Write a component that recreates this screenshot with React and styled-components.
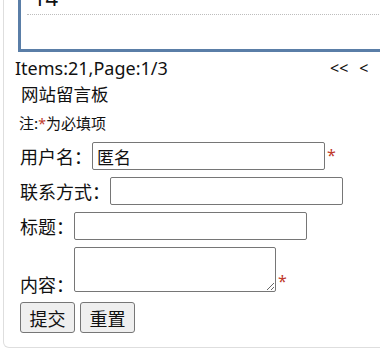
import React from 'react';
import styled, { createGlobalStyle } from 'styled-components';

const GlobalStyle = createGlobalStyle`
  html, body {
    margin: 0;
    padding: 0;
    overflow: hidden;
    background: #fff;
    color: #111;
    font-family: "Noto Sans CJK SC", "Noto Sans", sans-serif;
  }
`;

const Shell = styled.div`
  margin: -40px 0 0 3px;
  width: 440px;
  padding: 0 0 14px 11px;
  border: 1px solid #dedede;
  border-top: none;
  border-radius: 0 0 6px 6px;
  box-sizing: border-box;
`;

const ListBox = styled.div`
  margin-left: 3px;
  padding: 0 0 34px 6px;
  border: 3px solid #5a7ea7;
`;

const ListRow = styled.div`
  height: 52px;
  box-sizing: border-box;
  display: flex;
  align-items: flex-end;
  padding: 0 0 7px 6px;
  border-bottom: 1px dotted #bdbdbd;
  font-family: "Noto Sans", sans-serif;
  font-size: 22px;
  line-height: 20px;
`;

const Pager = styled.div`
  display: grid;
  grid-template-columns: 315px auto;
  align-items: center;
  margin-top: 5px;
  font-family: "Noto Sans", "Noto Sans CJK SC", sans-serif;
  font-size: 18px;
  line-height: 22px;
  white-space: nowrap;
`;

const Nav = styled.div`
  display: flex;
  gap: 11px;
  font-size: 16px;
`;

const NavLink = styled.a`
  color: #111;
  text-decoration: none;
`;

const Title = styled.div`
  margin: 4px 0 0 6px;
  font-size: 17.5px;
  line-height: 22px;
`;

const Note = styled.div`
  margin: 8px 0 0 4px;
  font-size: 15px;
  line-height: 20px;
`;

const Star = styled.span`
  color: #c0392b;
  font-family: "Noto Sans", sans-serif;
  font-size: ${p => (p.$small ? '14px' : '16px')};
  line-height: 16px;
  margin-left: ${p => (p.$small ? '0' : '2px')};
  margin-bottom: ${p => (p.$small ? '0' : '3px')};
`;

const Form = styled.form`
  margin: 9px 0 0 5px;
  display: flex;
  flex-direction: column;
  gap: 7px;
`;

const Row = styled.div`
  display: flex;
  align-items: ${p => (p.$bottom ? 'flex-end' : 'center')};
`;

const Label = styled.label`
  font-size: 18px;
  line-height: 16px;
  white-space: nowrap;
`;

const TextInput = styled.input`
  width: 233px;
  height: 28px;
  box-sizing: border-box;
  padding: 0 4px;
  border: 1px solid #767676;
  border-radius: 2px;
  font-family: "Noto Sans CJK SC", sans-serif;
  font-size: 17px;
  color: #111;
  background: #fff;
  outline: none;
`;

const TextArea = styled.textarea`
  width: 202px;
  height: 45px;
  box-sizing: border-box;
  border: 1px solid #767676;
  border-radius: 2px;
  font-family: "Noto Sans CJK SC", sans-serif;
  font-size: 15px;
  background: #fff;
  outline: none;
`;

const Buttons = styled.div`
  display: flex;
  gap: 5px;
  margin-top: 3px;
`;

const Button = styled.button`
  width: 55px;
  height: 31px;
  padding: 0;
  border: 1px solid #767676;
  border-radius: 3px;
  background: #efefef;
  color: #111;
  font-family: "Noto Sans CJK SC", sans-serif;
  font-size: 18px;
  line-height: 20px;
`;

export default function App() {
  return (
    <>
      <GlobalStyle />
      <Shell>
        <ListBox>
          <ListRow>14</ListRow>
        </ListBox>
        <Pager>
          <span>Items:21,Page:1/3</span>
          <Nav>
            <NavLink href="#">&lt;&lt;</NavLink>
            <NavLink href="#">&lt;</NavLink>
          </Nav>
        </Pager>
        <Title>网站留言板</Title>
        <Note>
          注:<Star $small>*</Star>为必填项
        </Note>
        <Form onSubmit={e => e.preventDefault()}>
          <Row>
            <Label>用户名：</Label>
            <TextInput defaultValue="匿名" />
            <Star>*</Star>
          </Row>
          <Row>
            <Label>联系方式：</Label>
            <TextInput />
          </Row>
          <Row>
            <Label>标题：</Label>
            <TextInput />
          </Row>
          <Row $bottom>
            <Label>内容：</Label>
            <TextArea />
            <Star>*</Star>
          </Row>
          <Buttons>
            <Button type="submit">提交</Button>
            <Button type="reset">重置</Button>
          </Buttons>
        </Form>
      </Shell>
    </>
  );
}
